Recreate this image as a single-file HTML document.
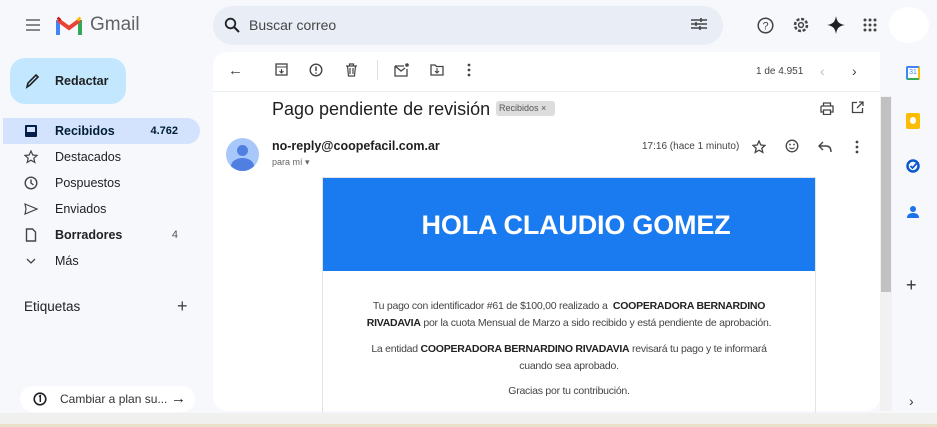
<!DOCTYPE html>
<html><head><meta charset="utf-8"><style>
*{margin:0;padding:0;box-sizing:border-box}
body{width:937px;height:427px;overflow:hidden;background:#f6f8fc;font-family:"Liberation Sans",sans-serif;color:#202124;position:relative}
.a{position:absolute}
.nav{position:absolute;left:0;width:200px;height:26px;font-size:12.5px;display:flex;align-items:center}
.nav .ic{position:absolute;left:24px;top:6px;width:14px;height:14px}
.nav .t{position:absolute;left:55px}
.nav .n{position:absolute;right:22px;font-size:11px}
svg{display:block}
.tb{position:absolute;top:63px}
.bt{font-size:10.5px;color:#444;text-align:center;line-height:17px;letter-spacing:-.25px}
</style></head><body>
<div class="a" style="left:25px;top:18px"><svg width="16" height="14"><path d="M1 2h14M1 7h14M1 12h14" stroke="#5f6368" stroke-width="1.6"/></svg></div>
<div class="a" style="left:56px;top:16px"><svg width="26" height="19" viewBox="0 0 26 19"><path d="M2 19V4" stroke="#4285f4" stroke-width="4"/><path d="M24 19V4" stroke="#34a853" stroke-width="4"/><path d="M2 4l11 8 11-8" stroke="#ea4335" stroke-width="4" fill="none"/><path d="M22 2l2 2" stroke="#fbbc04" stroke-width="4"/><path d="M4 2L2 4" stroke="#c5221f" stroke-width="4"/></svg></div>
<div class="a" style="left:90px;top:14px;font-size:19px;color:#5f6368">Gmail</div>
<div class="a" style="left:213px;top:6px;width:510px;height:39px;border-radius:20px;background:#e9eef6"></div>
<div class="a" style="left:224px;top:17px"><svg width="16" height="16"><circle cx="6.5" cy="6.5" r="4.8" stroke="#202124" stroke-width="1.8" fill="none"/><path d="M10 10l5 5" stroke="#202124" stroke-width="2"/></svg></div>
<div class="a" style="left:249px;top:17px;font-size:14px;color:#444">Buscar correo</div>
<div class="a" style="left:691px;top:17px"><svg width="16" height="14"><path d="M0 3h16M0 7h16M0 11h16" stroke="#444" stroke-width="1.5"/><path d="M10 1v4M5 5v4M9 9v4" stroke="#444" stroke-width="1.6"/></svg></div>
<div class="a" style="left:757px;top:17px"><svg width="17" height="17"><circle cx="8.5" cy="8.5" r="7.3" stroke="#444" stroke-width="1.5" fill="none"/><text x="8.5" y="12.5" font-size="11" text-anchor="middle" fill="#444" font-family="Liberation Sans">?</text></svg></div>
<div class="a" style="left:792px;top:16px"><svg width="18" height="18"><circle cx="9" cy="9" r="6" stroke="#444" stroke-width="2.5" fill="none" stroke-dasharray="3 1.7"/><circle cx="9" cy="9" r="2.4" stroke="#444" stroke-width="1.5" fill="none"/></svg></div>
<div class="a" style="left:827px;top:16px"><svg width="18" height="18"><path d="M9 0C10 6 12 8 18 9C12 10 10 12 9 18C8 12 6 10 0 9C6 8 8 6 9 0Z" fill="#202124"/></svg></div>
<div class="a" style="left:863px;top:18px"><svg width="14" height="14" fill="#444"><circle cx="2" cy="2" r="1.5"/><circle cx="7" cy="2" r="1.5"/><circle cx="12" cy="2" r="1.5"/><circle cx="2" cy="7" r="1.5"/><circle cx="7" cy="7" r="1.5"/><circle cx="12" cy="7" r="1.5"/><circle cx="2" cy="12" r="1.5"/><circle cx="7" cy="12" r="1.5"/><circle cx="12" cy="12" r="1.5"/></svg></div>
<div class="a" style="left:889px;top:7px;width:40px;height:36px;border-radius:50%;background:#fff"></div>
<div class="a" style="left:10px;top:58px;width:116px;height:46px;border-radius:15px;background:#c2e7ff"></div>
<div class="a" style="left:25px;top:73px"><svg width="14" height="16"><path d="M2 14L3 10L11 2L13 4L5 12Z" stroke="#202124" stroke-width="1.6" fill="none"/></svg></div>
<div class="a" style="left:55px;top:74px;font-size:12.5px;font-weight:bold;color:#202124">Redactar</div>
<div class="a" style="left:3px;top:118px;width:197px;height:26px;border-radius:0 13px 13px 0;background:#d3e3fd"></div>
<div class="nav" style="top:118px;font-weight:bold;color:#001d35"><div class="ic"><svg width="14" height="14"><rect x="1" y="1" width="12" height="12" rx="1" fill="#041e49"/><rect x="3" y="3" width="8" height="5" fill="#d3e3fd"/></svg></div><span class="t">Recibidos</span><span class="n">4.762</span></div>
<div class="nav" style="top:144px"><div class="ic"><svg width="14" height="14"><path d="M7 1l1.8 4 4.2.4-3.2 2.8 1 4.2L7 10.2 3.2 12.4l1-4.2L1 5.4l4.2-.4z" stroke="#444" stroke-width="1.2" fill="none"/></svg></div><span class="t">Destacados</span></div>
<div class="nav" style="top:170px"><div class="ic"><svg width="14" height="14"><circle cx="7" cy="7" r="5.8" stroke="#444" stroke-width="1.4" fill="none"/><path d="M7 3.5V7l2.5 2" stroke="#444" stroke-width="1.4" fill="none"/></svg></div><span class="t">Pospuestos</span></div>
<div class="nav" style="top:196px"><div class="ic"><svg width="14" height="14"><path d="M1 2l12 5-12 5 1-5z" stroke="#444" stroke-width="1.2" fill="none"/></svg></div><span class="t">Enviados</span></div>
<div class="nav" style="top:222px;font-weight:bold"><div class="ic"><svg width="14" height="14"><path d="M2.5 1h6l3 3v9h-9z" stroke="#444" stroke-width="1.4" fill="none"/></svg></div><span class="t">Borradores</span><span class="n" style="font-weight:normal;color:#555">4</span></div>
<div class="nav" style="top:248px"><div class="ic"><svg width="14" height="14"><path d="M3 5l4 4 4-4" stroke="#444" stroke-width="1.3" fill="none"/></svg></div><span class="t">Más</span></div>
<div class="a" style="left:24px;top:299px;font-size:13.5px;color:#202124">Etiquetas</div>
<div class="a" style="left:177px;top:296px;font-size:18px;color:#444">+</div>
<div class="a" style="left:20px;top:386px;width:175px;height:26px;border-radius:13px;background:#fff"></div>
<div class="a" style="left:33px;top:392px"><svg width="14" height="14"><circle cx="7" cy="7" r="5.8" stroke="#202124" stroke-width="1.6" fill="none"/><path d="M6 4.5l1.3-.8V10" stroke="#202124" stroke-width="1.5" fill="none"/></svg></div>
<div class="a" style="left:60px;top:392px;font-size:12px;color:#333">Cambiar a plan su...</div>
<div class="a" style="left:171px;top:390px;font-size:15px;color:#202124">→</div>
<div class="a" style="left:213px;top:52px;width:667px;height:359px;background:#fff;border-radius:14px 0 14px 14px"></div>
<div class="a" style="left:213px;top:91px;width:667px;height:1px;background:#eceff1"></div>
<div class="tb" style="left:228px;font-size:15px;color:#444;top:62px">←</div>
<div class="tb" style="left:275px"><svg width="13" height="13"><rect x="1" y="1" width="11" height="11" stroke="#444" stroke-width="1.3" fill="none"/><path d="M1 4h11M6.5 6v4M4.5 8l2 2 2-2" stroke="#444" stroke-width="1.1" fill="none"/></svg></div>
<div class="tb" style="left:309px"><svg width="14" height="14"><circle cx="7" cy="7" r="5.8" stroke="#444" stroke-width="1.4" fill="none"/><path d="M7 3.5v4.5M7 9.5v1.2" stroke="#444" stroke-width="1.5"/></svg></div>
<div class="tb" style="left:345px"><svg width="13" height="14"><path d="M1 3h11M4.5 3V1h4v2M2.5 3l1 10h6l1-10M5 5v6M8 5v6" stroke="#444" stroke-width="1.2" fill="none"/></svg></div>
<div class="a" style="left:377px;top:60px;width:1px;height:20px;background:#e0e0e0"></div>
<div class="tb" style="left:394px"><svg width="15" height="14"><path d="M1 3h9M1 3v10h12V6M1 3l6 5 4-3" stroke="#444" stroke-width="1.3" fill="none"/><circle cx="13" cy="2" r="1.8" fill="#444"/></svg></div>
<div class="tb" style="left:430px"><svg width="14" height="13"><path d="M1 2h4l1.5 1.5H13V12H1z" stroke="#444" stroke-width="1.3" fill="none"/><path d="M7 5v5M5 8l2 2 2-2" stroke="#444" stroke-width="1.1" fill="none"/></svg></div>
<div class="tb" style="left:467px"><svg width="4" height="14" fill="#444"><circle cx="2" cy="2" r="1.4"/><circle cx="2" cy="7" r="1.4"/><circle cx="2" cy="12" r="1.4"/></svg></div>
<div class="a" style="left:756px;top:66px;font-size:10px;color:#444">1 de 4.951</div>
<div class="a" style="left:820px;top:63px;font-size:14px;color:#bbb">‹</div>
<div class="a" style="left:852px;top:63px;font-size:14px;color:#444">›</div>
<div class="a" style="left:272px;top:99px;font-size:18px;color:#1f1f1f">Pago pendiente de revisión</div>
<div class="a" style="left:496px;top:101px;width:59px;height:15px;background:#ddd;border-radius:3px;font-size:9px;color:#555;padding:2px 3px">Recibidos ×</div>
<div class="a" style="left:820px;top:102px"><svg width="14" height="13"><path d="M3.5 4V1h7v3M1 4h12v6h-2.5M3.5 10H1V4M3.5 8h7v4.5h-7z" stroke="#444" stroke-width="1.3" fill="none"/></svg></div>
<div class="a" style="left:851px;top:101px"><svg width="13" height="13"><path d="M6 1.5H1.5v10h10V7M8 1h4v4M12 1L6 7" stroke="#444" stroke-width="1.3" fill="none"/></svg></div>
<div class="a" style="left:226px;top:138px;width:33px;height:33px;border-radius:50%;background:#a8c7fa;overflow:hidden"><div class="a" style="left:11px;top:7px;width:11px;height:11px;border-radius:50%;background:#4f7fe0"></div><div class="a" style="left:5px;top:20px;width:23px;height:16px;border-radius:50%;background:#4f7fe0"></div></div>
<div class="a" style="left:272px;top:139px;font-size:12.5px;font-weight:bold;color:#1f1f1f">no-reply@coopefacil.com.ar</div>
<div class="a" style="left:272px;top:157px;font-size:9px;color:#666">para mí ▾</div>
<div class="a" style="left:642px;top:141px;font-size:10px;color:#444">17:16 (hace 1 minuto)</div>
<div class="a" style="left:752px;top:140px"><svg width="14" height="14"><path d="M7 1l1.8 4 4.2.4-3.2 2.8 1 4.2L7 10.2 3.2 12.4l1-4.2L1 5.4l4.2-.4z" stroke="#444" stroke-width="1.3" fill="none"/></svg></div>
<div class="a" style="left:785px;top:139px"><svg width="14" height="14"><circle cx="7" cy="7" r="5.8" stroke="#444" stroke-width="1.3" fill="none"/><circle cx="5" cy="5.5" r=".9" fill="#444"/><circle cx="9" cy="5.5" r=".9" fill="#444"/><path d="M4.5 8.5q2.5 2.5 5 0" stroke="#444" stroke-width="1.1" fill="none"/></svg></div>
<div class="a" style="left:818px;top:141px"><svg width="14" height="12"><path d="M5 1L1 5l4 4M1 5h7q5 0 5 6" stroke="#444" stroke-width="1.4" fill="none"/></svg></div>
<div class="a" style="left:855px;top:140px"><svg width="4" height="14" fill="#444"><circle cx="2" cy="2" r="1.4"/><circle cx="2" cy="7" r="1.4"/><circle cx="2" cy="12" r="1.4"/></svg></div>
<div class="a" style="left:322px;top:177px;width:494px;height:240px;border:1px solid #e3e3e3;border-bottom:none"></div>
<div class="a" style="left:323px;top:178px;width:492px;height:93px;background:#1a7af0;color:#fff;font-size:27px;font-weight:bold;text-align:center;line-height:95px;letter-spacing:-.2px;padding-left:14px">HOLA CLAUDIO GOMEZ</div>
<div class="a bt" style="left:346px;top:298px;width:446px">Tu pago con identificador #61 de $100,00 realizado a &nbsp;<b style="color:#222">COOPERADORA BERNARDINO RIVADAVIA</b> por la cuota Mensual de Marzo a sido recibido y está pendiente de aprobación.</div>
<div class="a bt" style="left:360px;top:341px;width:418px">La entidad <b style="color:#222">COOPERADORA BERNARDINO RIVADAVIA</b> revisará tu pago y te informará cuando sea aprobado.</div>
<div class="a bt" style="left:330px;top:383px;width:478px">Gracias por tu contribución.</div>
<div class="a" style="left:880px;top:96px;width:12px;height:315px;background:#f1f1f1"></div>
<div class="a" style="left:881px;top:97px;width:10px;height:195px;background:#c1c1c1"></div>
<div class="a" style="left:906px;top:66px;width:14px;height:14px;border:2px solid #4285f4;border-radius:2px;background:#fff;font-size:7px;color:#4285f4;text-align:center;line-height:10px;border-right-color:#fbbc04;border-bottom-color:#34a853">31</div>
<div class="a" style="left:906px;top:113px;width:14px;height:16px;background:#fbbc04;border-radius:2px"><div class="a" style="left:4px;top:4px;width:6px;height:7px;border-radius:50%;background:#fff"></div></div>
<div class="a" style="left:906px;top:159px"><svg width="14" height="14"><circle cx="7" cy="7" r="5.5" stroke="#0b57d0" stroke-width="2.5" fill="none"/><path d="M4.5 7l2 2 4-4.5" stroke="#0b57d0" stroke-width="1.8" fill="none"/></svg></div>
<div class="a" style="left:907px;top:205px"><svg width="12" height="14" fill="#1a73e8"><circle cx="6" cy="4" r="3"/><path d="M0 13q0-5 6-5t6 5z"/></svg></div>
<div class="a" style="left:906px;top:275px;font-size:18px;color:#333">+</div>
<div class="a" style="left:909px;top:393px;font-size:14px;color:#333">›</div>
<div class="a" style="left:0;top:413px;width:937px;height:14px;background:#f0f0ee"></div>
<div class="a" style="left:0;top:424px;width:937px;height:3px;background:#e8e0c8"></div>
</body></html>
